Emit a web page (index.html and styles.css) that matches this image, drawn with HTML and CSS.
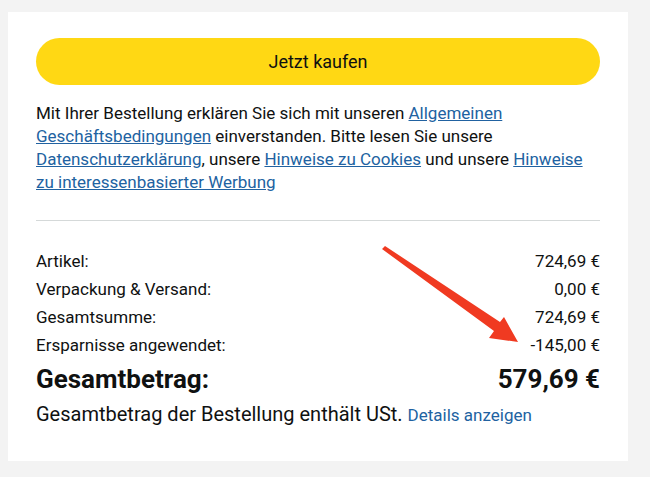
FILE: index.html
```html
<!DOCTYPE html>
<html lang="de">
<head>
<meta charset="utf-8">
<link rel="stylesheet" href="styles.css">
</head>
<body>
<div class="card">
  <button class="buy">Jetzt kaufen</button>
  <p class="legal">Mit Ihrer Bestellung erklären Sie sich mit unseren <a href="#">Allgemeinen Geschäftsbedingungen</a> einverstanden. Bitte lesen Sie unsere <a href="#">Datenschutzerklärung</a>, unsere <a href="#">Hinweise zu Cookies</a> und unsere <a href="#">Hinweise zu interessenbasierter Werbung</a></p>
  <hr class="divider">
  <div class="rows">
    <div class="row"><span>Artikel:</span><span>724,69 €</span></div>
    <div class="row"><span>Verpackung &amp; Versand:</span><span>0,00 €</span></div>
    <div class="row"><span>Gesamtsumme:</span><span>724,69 €</span></div>
    <div class="row"><span>Ersparnisse angewendet:</span><span>-145,00 €</span></div>
  </div>
  <div class="total"><span>Gesamtbetrag:</span><span>579,69 €</span></div>
  <p class="vat">Gesamtbetrag der Bestellung enthält USt. <a href="#" class="details">Details anzeigen</a></p>
  <svg class="arrow" width="650" height="477" viewBox="0 0 650 477">
    <polygon points="382,249 385,246 500,322 504,317 518,342 489,338 494,331" fill="#f03a21"/>
  </svg>
</div>
</body>
</html>
```
FILE: styles.css
```css
html, body { margin: 0; padding: 0; }
body {
  background: #f3f3f3;
  width: 650px;
  height: 477px;
  overflow: hidden;
  font-family: Roboto, "Liberation Sans", sans-serif;
  color: #0f1111;
}
.card {
  background: #fff;
  margin: 12px 0 0 8px;
  width: 620px;
  height: 449px;
  box-sizing: border-box;
  padding: 26px 28px 0 28px;
}
.buy {
  display: block;
  width: 100%;
  height: 47px;
  border: none;
  border-radius: 24px;
  background: #ffd814;
  font-family: inherit;
  font-size: 18px;
  color: #0f1111;
}
.legal {
  margin: 17px 0 0 0;
  font-size: 17px;
  line-height: 23px;
}
.legal a { color: #2162a1; text-decoration: underline; }
.divider {
  border: none;
  border-top: 1px solid #d5d9d9;
  margin: 26px 0 0 0;
}
.rows { margin-top: 26px; }
.row {
  display: flex;
  justify-content: space-between;
  font-size: 17px;
  line-height: 28px;
}
.total {
  display: flex;
  justify-content: space-between;
  font-size: 26px;
  font-weight: bold;
  line-height: 36px;
  margin-top: 2px;
}
.vat { margin: 5px 0 0 0; font-size: 20px; line-height: 24px; }
.details { color: #2162a1; text-decoration: none; font-size: 17px; }
.arrow { position: absolute; left: 0; top: 0; pointer-events: none; }
```
